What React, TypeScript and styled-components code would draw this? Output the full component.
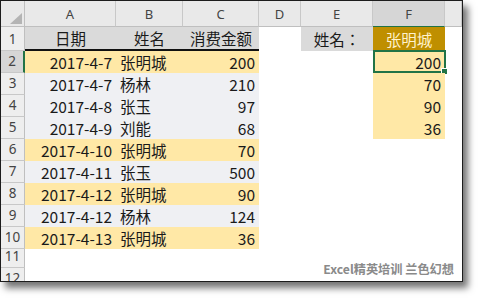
import React from 'react';
import styled, {createGlobalStyle} from 'styled-components';

const GlobalStyle = createGlobalStyle`
  html, body {
    margin: 0;
    padding: 0;
    background: #fff;
  }
  body {
    font-family: "Noto Sans CJK SC", "Noto Sans", sans-serif;
  }
`

const Page = styled.div`
  width: 484px;
  height: 303px;
  background: #fff;
  overflow: hidden;
`

const Frame = styled.div`
  position: relative;
  width: 461px;
  height: 280px;
  border: 1px solid #1c1c1c;
  background: #fff;
  overflow: hidden;
  box-shadow: 5px 6px 7px rgba(0, 0, 0, 0.55);
`

const Sheet = styled.div`
  display: grid;
  grid-template-columns: 24px 91px 67px 76px 42px 72px 72px 1fr;
  grid-template-rows: 26px 24px repeat(9, 22px) 19px 22px;
`

const Corner = styled.div`
  background: #e9e9e9;
  border-right: 1px solid #bfbfbf;
  border-bottom: 1px solid #bfbfbf;
  display: flex;
  align-items: flex-end;
  justify-content: flex-end;
  padding: 0 2px 2px 0;
  box-sizing: border-box;
`

const ColHead = styled.div<{$active?: boolean}>`
  background: ${p => (p.$active ? '#d6d6d6' : '#e9e9e9')};
  border-right: 1px solid #c8c8c8;
  border-bottom: 1px solid ${p => (p.$active ? '#217346' : '#bfbfbf')};
  color: #444;
  font-family: "Noto Sans", sans-serif;
  font-size: 13px;
  display: flex;
  align-items: flex-end;
  justify-content: center;
  padding-bottom: 3px;
  box-sizing: border-box;
`

const RowHead = styled.div<{$active?: boolean}>`
  background: ${p => (p.$active ? '#d6d6d6' : '#eeeeee')};
  border-right: ${p => (p.$active ? '2px solid #217346' : '1px solid #bfbfbf')};
  border-bottom: 1px solid #c8c8c8;
  color: #444;
  font-family: "Noto Sans", sans-serif;
  font-size: 13.5px;
  display: flex;
  align-items: flex-end;
  justify-content: center;
  padding-bottom: 2px;
  box-sizing: border-box;
`

const Cell = styled.div<{$fill?: string; $align?: string; $color?: string; $line?: boolean}>`
  position: relative;
  background: ${p => p.$fill || 'transparent'};
  color: ${p => p.$color || '#1a1a1a'};
  font-size: 15.5px;
  display: flex;
  align-items: center;
  justify-content: ${p => p.$align || 'flex-start'};
  padding: 0 4px;
  box-sizing: border-box;
  white-space: nowrap;
  border-bottom: ${p => (p.$line ? '2px solid #111' : 'none')};
`

const Label = styled(Cell)`
  font-family: "Noto Sans CJK TC", "Noto Sans CJK SC", sans-serif;
`

const Selected = styled.div`
  position: absolute;
  inset: -1px -1px 0 0;
  border: 2px solid #217346;
  pointer-events: none;
`

const Handle = styled.div`
  position: absolute;
  right: -4px;
  bottom: -4px;
  width: 5px;
  height: 5px;
  background: #217346;
  border: 1px solid #fff;
`

const Watermark = styled.div`
  position: absolute;
  right: 8px;
  bottom: 3px;
  font-size: 12.2px;
  font-weight: bold;
  color: #8a8a8a;
`

const YELLOW = '#ffe8a6';
const GREY = '#eff0f3';
const HEAD = '#dadada';

const rows = [
  ['2017-4-7', '张明城', '200'],
  ['2017-4-7', '杨林', '210'],
  ['2017-4-8', '张玉', '97'],
  ['2017-4-9', '刘能', '68'],
  ['2017-4-10', '张明城', '70'],
  ['2017-4-11', '张玉', '500'],
  ['2017-4-12', '张明城', '90'],
  ['2017-4-12', '杨林', '124'],
  ['2017-4-13', '张明城', '36'],
];

const result = ['200', '70', '90', '36'];
const cols = ['A', 'B', 'C', 'D', 'E', 'F', ''];

const App: React.FC = () => {
  return (
    <Page>
      <GlobalStyle />
      <Frame>
        <Sheet>
          <Corner>
            <svg width="12" height="11" viewBox="0 0 12 11">
              <polygon points="12,0 12,11 0,11" fill="#b4b4b4" />
            </svg>
          </Corner>
          {cols.map((c, i) => (
            <ColHead key={i} $active={c === 'F'}>{c}</ColHead>
          ))}

          <RowHead>1</RowHead>
          <Cell $fill={HEAD} $align="center" $line>日期</Cell>
          <Cell $fill={HEAD} $align="center" $line>姓名</Cell>
          <Cell $fill={HEAD} $align="center" $line>消费金额</Cell>
          <Cell />
          <Label $fill={HEAD} $align="center">姓名：</Label>
          <Cell $fill="#bf8f00" $align="center" $color="#fff2cc">张明城</Cell>
          <Cell />

          {rows.map((r, i) => {
            const fill = r[1] === '张明城' ? YELLOW : GREY;
            const res = result[i];
            return (
              <React.Fragment key={i}>
                <RowHead $active={i === 0}>{i + 2}</RowHead>
                <Cell $fill={fill} $align="flex-end">{r[0]}</Cell>
                <Cell $fill={fill}>{r[1]}</Cell>
                <Cell $fill={fill} $align="flex-end">{r[2]}</Cell>
                <Cell />
                <Cell />
                <Cell $fill={res ? YELLOW : undefined} $align="flex-end">
                  {res}
                  {i === 0 && (
                    <Selected>
                      <Handle />
                    </Selected>
                  )}
                </Cell>
                <Cell />
              </React.Fragment>
            );
          })}

          {[11, 12].map(n => (
            <React.Fragment key={n}>
              <RowHead>{n}</RowHead>
              <Cell /><Cell /><Cell /><Cell /><Cell /><Cell /><Cell />
            </React.Fragment>
          ))}
        </Sheet>
        <Watermark>Excel精英培训 兰色幻想</Watermark>
      </Frame>
    </Page>
  );
};

export default App;
